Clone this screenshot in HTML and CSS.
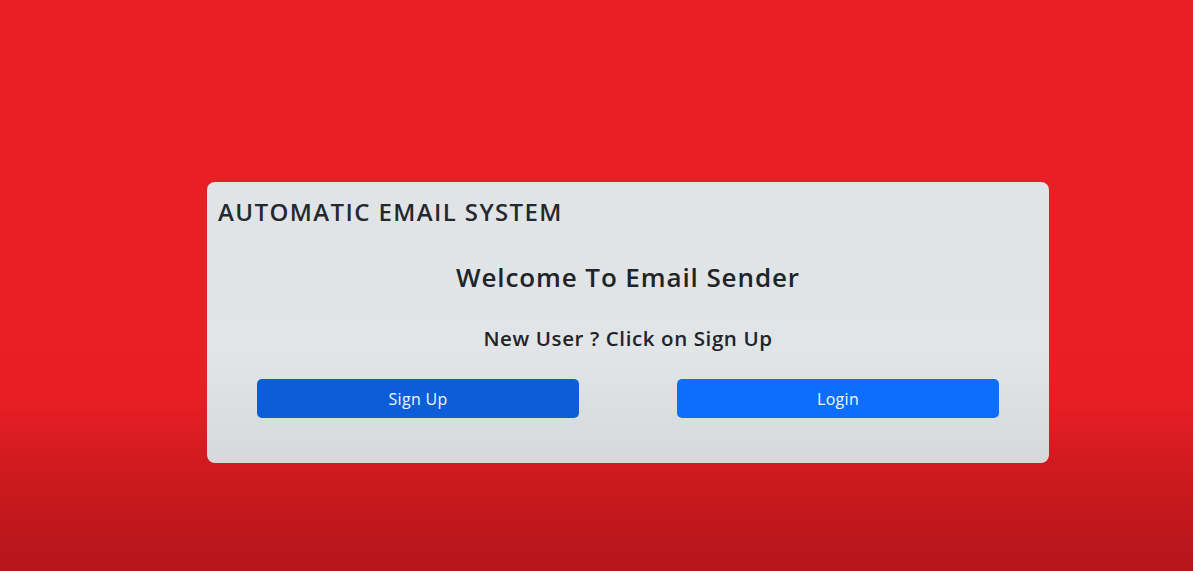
FILE: index.html
```html
<!DOCTYPE html>
<html>
<head>
<meta charset="utf-8">
<link rel="stylesheet" href="styles.css">
</head>
<body>
<main class="page">
  <section class="card">
    <h1 class="brand">AUTOMATIC EMAIL SYSTEM</h1>
    <h2 class="welcome">Welcome To Email Sender</h2>
    <p class="hint">New User ? Click on Sign Up</p>
    <div class="actions">
      <button class="btn btn-signup">Sign Up</button>
      <button class="btn btn-login">Login</button>
    </div>
  </section>
</main>
</body>
</html>
```
FILE: styles.css
```css
html, body {
  margin: 0;
  height: 100%;
}
body {
  font-family: "Open Sans", "Noto Sans", sans-serif;
  background: linear-gradient(to bottom, #e91f25 0%, #e71f25 70%, #c9191e 85%, #b4161b 100%);
}
.page {
  height: 571px;
  box-sizing: border-box;
  padding-top: 182px;
  display: flex;
  justify-content: center;
}
.card {
  width: 842px;
  height: 281px;
  box-sizing: border-box;
  margin-left: 63px;
  background: linear-gradient(to bottom, #e1e4e7 0%, #e2e5e7 60%, #d6d9db 100%);
  border-radius: 8px;
  padding: 16px 50px 0 50px;
  display: flex;
  flex-direction: column;
}
.brand {
  margin: 0 0 0 -39px;
  font-size: 24px;
  font-weight: 600;
  color: #24292e;
  line-height: 28px;
  letter-spacing: 1.4px;
}
.welcome {
  margin: 35px 0 0;
  text-align: center;
  font-size: 26px;
  font-weight: 600;
  color: #202428;
  line-height: 32px;
  letter-spacing: 0.9px;
}
.hint {
  margin: 32px 0 0;
  text-align: center;
  font-size: 20.5px;
  font-weight: 600;
  color: #202428;
  line-height: 26px;
  letter-spacing: 0.6px;
}
.actions {
  margin-top: 28px;
  display: flex;
  justify-content: space-between;
}
.btn {
  width: 322px;
  height: 39px;
  border: none;
  border-radius: 5px;
  color: #f2f6fc;
  font-family: "Open Sans", "Noto Sans", sans-serif;
  font-size: 16px;
  letter-spacing: 0.3px;
  padding: 0;
}
.btn-signup {
  background: #0b5ed7;
}
.btn-login {
  background: #0d6efd;
}
```
